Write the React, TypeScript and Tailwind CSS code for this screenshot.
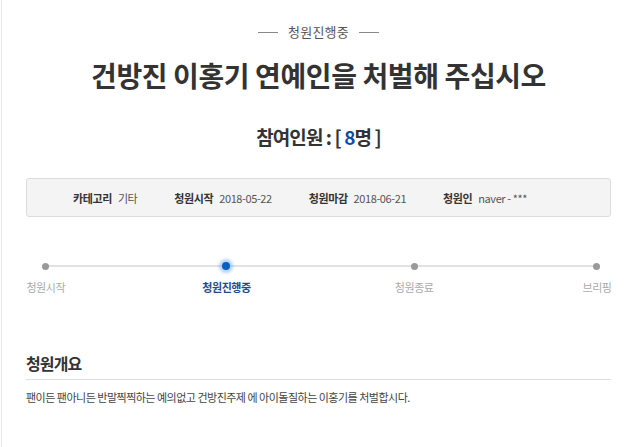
const font = { fontFamily: '"Noto Sans CJK KR", "Noto Sans", sans-serif' }

const infoItems = [
  { label: '카테고리', value: '기타' },
  { label: '청원시작', value: '2018-05-22' },
  { label: '청원마감', value: '2018-06-21' },
  { label: '청원인', value: 'naver - ***' },
]

const steps = [
  { label: '청원시작', width: 'w-[40px]', gap: 'ml-0', active: false },
  { label: '청원진행중', width: 'w-[50px]', gap: 'ml-[136px]', active: true },
  { label: '청원종료', width: 'w-[40px]', gap: 'ml-[143px]', active: false },
  { label: '브리핑', width: 'w-[28px]', gap: 'ml-[149px]', active: false },
]

export default function App() {
  return (
    <div className="h-[447px] w-[635px] overflow-hidden bg-white pl-px" style={font}>
      <div className="h-full border-l border-[#e6e6e6] px-[24px]">
        {/* 상태 표시 */}
        <div className="flex items-center justify-center gap-[10px] pt-[24px]">
          <span className="h-px w-[20px] bg-[#888]" />
          <span className="text-[13px] leading-[16px] tracking-[0.2px] text-[#555]">청원진행중</span>
          <span className="h-px w-[20px] bg-[#888]" />
        </div>

        <h1 className="mt-[19px] text-center text-[28px] font-bold leading-[32px] tracking-[-0.4px] text-[#333]">
          건방진 이홍기 연예인을 처벌해 주십시오
        </h1>

        <p className="mt-[34px] text-center text-[19px] font-bold leading-[24px] tracking-[-0.9px] text-[#333]">
          참여인원 : [ <span className="text-[#0b4da2]">8</span>명 ]
        </p>

        {/* 청원 정보 */}
        <div className="mt-[29px] flex h-[39px] items-center gap-[37px] rounded-[3px] border border-[#dcdcdc] bg-[#f4f4f4] pl-[46px]">
          {infoItems.map((item) => (
            <div key={item.label} className="flex items-center gap-[6px] text-[11px] leading-[14px] tracking-[-0.4px]">
              <span className="font-bold text-[#333]">{item.label}</span>
              <span className="text-[#555]">{item.value}</span>
            </div>
          ))}
        </div>

        {/* 진행 단계 */}
        <div className="relative mt-[43px]">
          <div className="absolute left-[20px] right-[14px] top-[5px] h-[2px] bg-[#e2e2e2]" />
          <div className="relative flex">
            {steps.map((step) => (
              <div key={step.label} className={`flex flex-col items-center ${step.width} ${step.gap}`}>
                <div className="flex h-[12px] items-center justify-center">
                  {step.active ? (
                    <span className="h-[8px] w-[8px] rounded-full bg-[#0a5fc6] shadow-[0_0_3px_3px_rgba(90,160,235,0.45)]" />
                  ) : (
                    <span className="h-[7px] w-[7px] rounded-full bg-[#9a9a9a]" />
                  )}
                </div>
                <span
                  className={`mt-[8px] whitespace-nowrap text-[11px] leading-[14px] tracking-[-0.4px] ${
                    step.active ? 'font-bold text-[#1f4c8a]' : 'text-[#aaa]'
                  }`}
                >
                  {step.label}
                </span>
              </div>
            ))}
          </div>
        </div>

        {/* 청원개요 */}
        <h2 className="mt-[59px] border-b border-[#dedede] pb-[6px] text-[16px] font-bold leading-[20px] tracking-[-0.9px] text-[#333]">
          청원개요
        </h2>
        <p className="mt-[10px] text-[11px] leading-[14px] tracking-[-0.5px] text-[#444]">
          팬이든 팬아니든 반말찍찍하는 예의없고 건방진주제 에 아이돌질하는 이홍기를 처벌합시다.
        </p>
      </div>
    </div>
  )
}
